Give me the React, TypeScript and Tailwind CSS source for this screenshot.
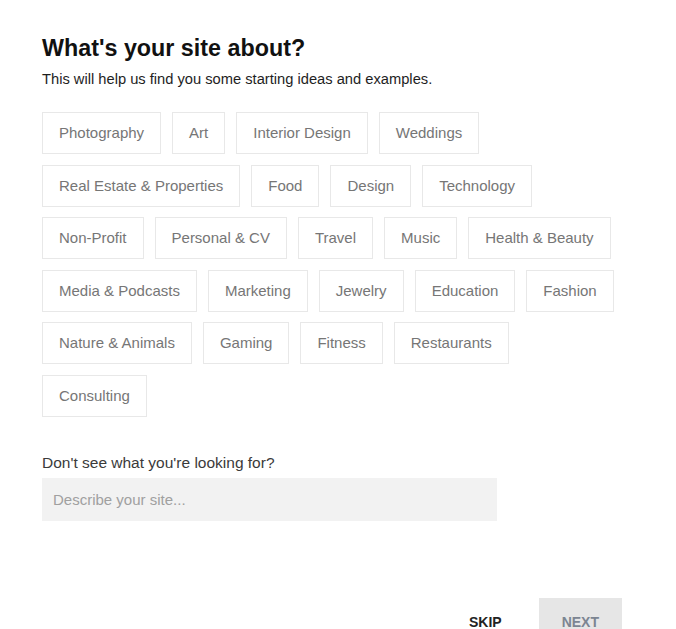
import { useState } from 'react'

const categories = [
  'Photography',
  'Art',
  'Interior Design',
  'Weddings',
  'Real Estate & Properties',
  'Food',
  'Design',
  'Technology',
  'Non-Profit',
  'Personal & CV',
  'Travel',
  'Music',
  'Health & Beauty',
  'Media & Podcasts',
  'Marketing',
  'Jewelry',
  'Education',
  'Fashion',
  'Nature & Animals',
  'Gaming',
  'Fitness',
  'Restaurants',
  'Consulting',
]

const App = () => {
  const [selected, setSelected] = useState<string | null>(null)
  const [description, setDescription] = useState<string>('')

  return (
    <div
      className="min-h-screen bg-white pl-[42px] pt-[34px]"
      style={{ fontFamily: '"Liberation Sans", Arial, sans-serif' }}
    >
      <h1 className="text-[23.3px] leading-[28px] font-bold text-[#111111]">
        What's your site about?
      </h1>
      <p className="mt-[7px] text-[14.7px] leading-[20px] text-[#1e1e1e]">
        This will help us find you some starting ideas and examples.
      </p>

      <div className="mt-[23px] flex w-[572px] flex-wrap gap-x-[11px] gap-y-[10.6px]">
        {categories.map((cat) => (
          <button
            key={cat}
            type="button"
            onClick={() => setSelected(cat)}
            className={
              selected === cat
                ? 'border border-[#116dff] px-4 py-[10px] text-[15px] leading-[20px] text-[#116dff]'
                : 'border border-[#e8e8e8] px-4 py-[10px] text-[15px] leading-[20px] text-[#767676] hover:border-[#cccccc]'
            }
          >
            {cat}
          </button>
        ))}
      </div>

      <label className="mt-[36px] block text-[15.5px] leading-[20px] text-[#3a3a3a]">
        Don't see what you're looking for?
      </label>
      <input
        type="text"
        value={description}
        onChange={(e) => setDescription(e.target.value)}
        placeholder="Describe your site..."
        className="mt-[5px] h-[43px] w-[455px] bg-[#f2f2f2] pl-[11px] text-[15px] text-[#333333] outline-none placeholder:text-[#a0a0a0]"
      />

      <div className="mt-[77px] flex w-[580px] justify-end gap-[14px]">
        <button
          type="button"
          className="px-[23px] py-[14px] text-[14px] leading-[20px] font-bold text-[#222222]"
        >
          SKIP
        </button>
        <button
          type="button"
          className="bg-[#e6e6e6] px-[23px] py-[14px] text-[14px] leading-[20px] font-bold text-[#7c8592]"
        >
          NEXT
        </button>
      </div>
    </div>
  )
}

export default App
